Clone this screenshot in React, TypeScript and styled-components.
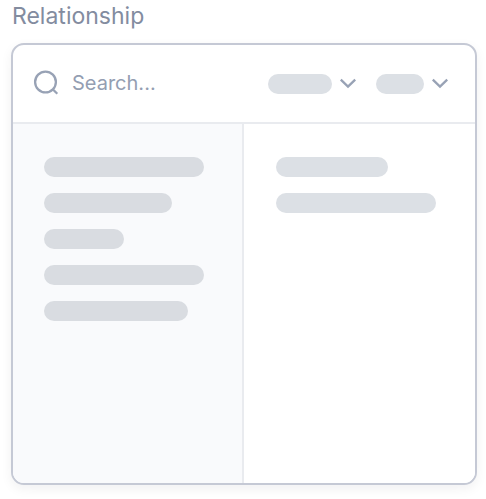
import React from "react";
import styled, { createGlobalStyle } from "styled-components";

const GlobalStyle = createGlobalStyle`
  *, *::before, *::after {
    box-sizing: border-box;
  }

  body {
    margin: 0;
    background: #ffffff;
    font-family: Inter, "Liberation Sans", sans-serif;
  }
`;

const Field = styled.section`
  display: flex;
  flex-direction: column;
  gap: 11px;
  padding: 0 9px 14px 11px;
`;

const Title = styled.h2`
  margin: 0;
  padding-left: 1px;
  color: #838c9f;
  font-size: 23px;
  font-weight: 400;
  line-height: 32px;
`;

const Card = styled.div`
  display: flex;
  flex-direction: column;
  overflow: hidden;
  border: 2px solid #c5c9d5;
  border-radius: 13px;
  background: #ffffff;
  box-shadow: 0 4px 12px rgba(20, 24, 40, 0.06);
`;

const Toolbar = styled.div`
  display: flex;
  align-items: center;
  gap: 20px;
  height: 79px;
  padding: 0 27px 0 20px;
  border-bottom: 2px solid #e9ebef;
`;

const SearchLabel = styled.label`
  display: flex;
  flex: 1;
  align-items: center;
  gap: 12px;
  min-width: 0;
  padding-bottom: 2px;
  color: #98a2b5;
`;

const SearchInput = styled.input`
  flex: 1;
  min-width: 0;
  width: 100%;
  height: 32px;
  padding: 0;
  border: 0;
  outline: 0;
  background: transparent;
  color: #667085;
  font: inherit;
  font-size: 20px;

  &::placeholder {
    color: #949eb2;
    opacity: 1;
  }
`;

const FilterButton = styled.button`
  display: flex;
  align-items: center;
  gap: 8px;
  padding: 0;
  border: 0;
  background: transparent;
  color: #98a2b5;
  cursor: pointer;
`;

const Columns = styled.div`
  display: grid;
  grid-template-columns: 1fr 1fr;
  min-height: 359px;
`;

const Column = styled.div<{ $tinted?: boolean }>`
  display: flex;
  flex-direction: column;
  gap: 16px;
  padding: 33px 31px 33px ${({ $tinted }) => ($tinted ? 31 : 32)}px;
  background: ${({ $tinted }) => ($tinted ? "#f9fafc" : "#ffffff")};
  border-right: ${({ $tinted }) => ($tinted ? "2px solid #e9ebef" : "0")};
`;

const Pill = styled.span<{ $width: number; $dark?: boolean }>`
  display: block;
  flex: none;
  width: ${({ $width }) => $width}px;
  height: 20px;
  border-radius: 10px;
  background: ${({ $dark }) => ($dark ? "#d9dce1" : "#dce0e5")};
`;

const SearchIcon = () => (
  <svg width="27" height="28" viewBox="0 0 27 28" fill="none" stroke="currentColor" strokeWidth="2.3" aria-hidden="true">
    <circle cx="12.5" cy="13" r="10.4" />
    <path d="M19.7 20.2L24.3 24.8" />
  </svg>
);

const ChevronIcon = () => (
  <svg width="16" height="12" viewBox="0 0 16 12" fill="none" stroke="currentColor" strokeWidth="2.3" aria-hidden="true">
    <path d="M0.8 1.6L8 8.6L15.2 1.6" />
  </svg>
);

const filters = [
  { name: "First filter", width: 64 },
  { name: "Second filter", width: 48 },
];
const leftItems = [160, 128, 80, 160, 144];
const rightItems = [112, 160];

export default function App() {
  return (
    <>
      <GlobalStyle />
      <Field aria-labelledby="relationship-title">
        <Title id="relationship-title">Relationship</Title>
        <Card>
          <Toolbar>
            <SearchLabel>
              <SearchIcon />
              <SearchInput type="text" aria-label="Search" placeholder="Search..." />
            </SearchLabel>
            {filters.map(({ name, width }) => (
              <FilterButton key={name} type="button" aria-label={name}>
                <Pill $width={width} />
                <ChevronIcon />
              </FilterButton>
            ))}
          </Toolbar>
          <Columns>
            <Column $tinted>
              {leftItems.map((width, index) => (
                <Pill key={index} $width={width} $dark />
              ))}
            </Column>
            <Column>
              {rightItems.map((width, index) => (
                <Pill key={index} $width={width} />
              ))}
            </Column>
          </Columns>
        </Card>
      </Field>
    </>
  );
}
